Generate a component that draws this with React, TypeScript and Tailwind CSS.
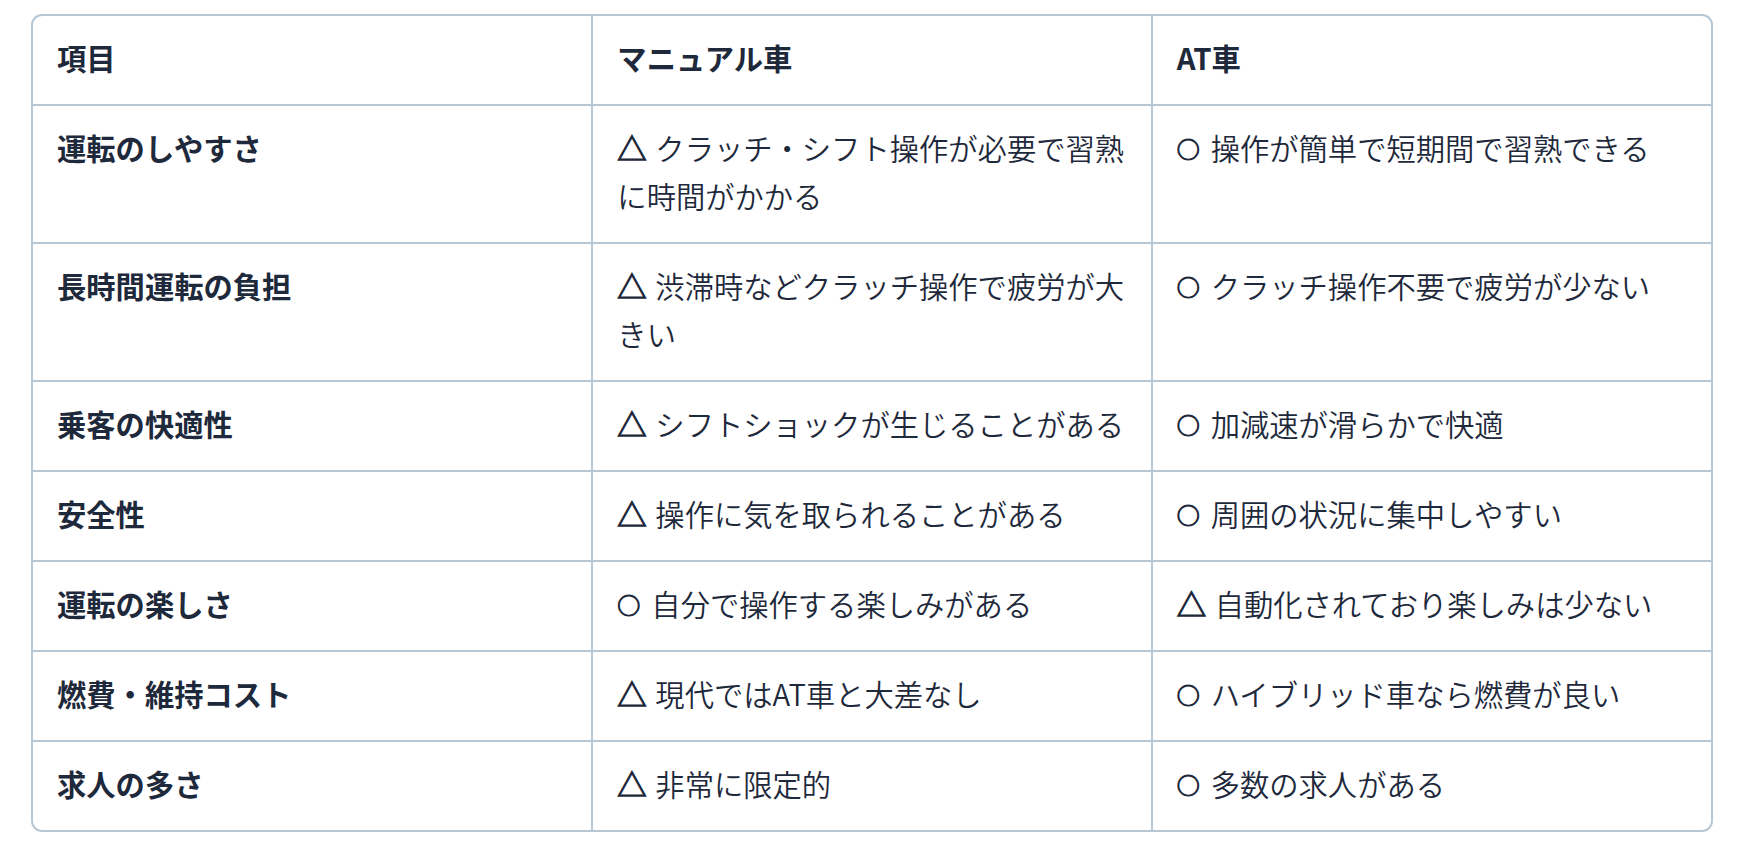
import React from 'react';

type Mark = 'good' | 'fair';

type Row = {
  item: string;
  manual: [Mark, string];
  auto: [Mark, string];
};

const rows: Row[] = [
  { item: '運転のしやすさ', manual: ['fair', 'クラッチ・シフト操作が必要で習熟に時間がかかる'], auto: ['good', '操作が簡単で短期間で習熟できる'] },
  { item: '長時間運転の負担', manual: ['fair', '渋滞時などクラッチ操作で疲労が大きい'], auto: ['good', 'クラッチ操作不要で疲労が少ない'] },
  { item: '乗客の快適性', manual: ['fair', 'シフトショックが生じることがある'], auto: ['good', '加減速が滑らかで快適'] },
  { item: '安全性', manual: ['fair', '操作に気を取られることがある'], auto: ['good', '周囲の状況に集中しやすい'] },
  { item: '運転の楽しさ', manual: ['good', '自分で操作する楽しみがある'], auto: ['fair', '自動化されており楽しみは少ない'] },
  { item: '燃費・維持コスト', manual: ['fair', '現代ではAT車と大差なし'], auto: ['good', 'ハイブリッド車なら燃費が良い'] },
  { item: '求人の多さ', manual: ['fair', '非常に限定的'], auto: ['good', '多数の求人がある'] },
];

const cell = 'px-6 pt-[17px] pb-[23px] align-top text-left border-[#b7c7d4]';

function Rated({ value }: { value: [Mark, string] }) {
  const [mark, text] = value;
  return (
    <>
      {mark === 'fair' ? (
        <span className="inline-block w-[38px] leading-none [-webkit-text-stroke:1.2px_#1e293b]">△ </span>
      ) : (
        <span className="inline-block w-[34px] align-[2px] text-[23px] leading-none [-webkit-text-stroke:1.1px_#1e293b]">○ </span>
      )}
      {text}
    </>
  );
}

export default function App() {
  return (
    <div className="min-h-screen bg-white pl-[31px] pt-[14px] font-['Noto_Sans_CJK_JP','Noto_Sans',sans-serif] text-[29.3px] leading-[48px] text-[#1e293b]">
      <div className="w-[1682px] overflow-hidden rounded-[11px] border-2 border-[#b7c7d4]">
        <table className="w-full table-fixed border-collapse">
          <thead>
            <tr>
              <th className={`${cell} w-1/3 border-r-2 border-b-2 font-bold`}>項目</th>
              <th className={`${cell} w-1/3 border-r-2 border-b-2 font-bold`}>マニュアル車</th>
              <th className={`${cell} w-1/3 border-b-2 font-bold`}>AT車</th>
            </tr>
          </thead>
          <tbody>
            {rows.map((row, i) => {
              const last = i === rows.length - 1;
              return (
                <tr key={row.item}>
                  <td className={`${cell} border-r-2 font-semibold ${last ? '' : 'border-b-2'}`}>{row.item}</td>
                  <td className={`${cell} border-r-2 font-[350] ${last ? '' : 'border-b-2'}`}>
                    <Rated value={row.manual} />
                  </td>
                  <td className={`${cell} font-[350] ${last ? '' : 'border-b-2'}`}>
                    <Rated value={row.auto} />
                  </td>
                </tr>
              );
            })}
          </tbody>
        </table>
      </div>
    </div>
  );
}
